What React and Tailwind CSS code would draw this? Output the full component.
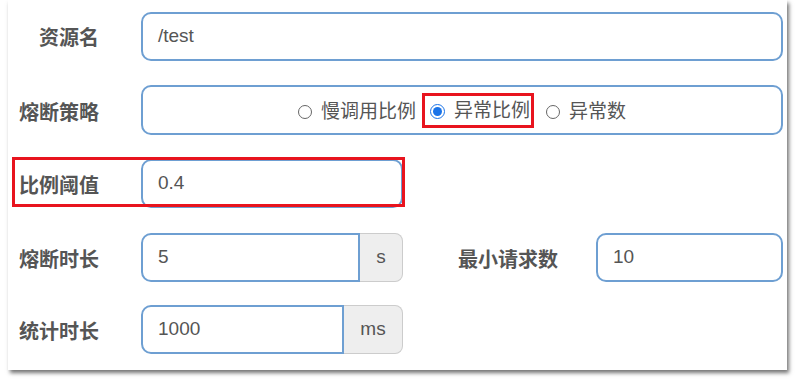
import React from "react";

const font = { fontFamily: '"Liberation Sans", "Noto Sans CJK SC", sans-serif' };

function Label({ children, className = "" }) {
  return (
    <div className={"text-right font-bold text-[20px] text-[#555] leading-none " + className}>
      {children}
    </div>
  );
}

function Radio({ checked }) {
  if (checked) {
    return (
      <span className="w-[15px] h-[15px] shrink-0 rounded-full border-[1.5px] border-[#1a73e8] bg-white flex items-center justify-center">
        <span className="w-[9px] h-[9px] rounded-full bg-[#1a73e8]" />
      </span>
    );
  }
  return <span className="w-[14px] h-[14px] shrink-0 rounded-full border-[1.5px] border-[#666] bg-white" />;
}

export default function App() {
  return (
    <div className="w-[797px] h-[385px] bg-white" style={font}>
      <div className="ml-[8px] w-[779px] h-[370px] bg-white shadow-[2px_3px_4px_rgba(0,0,0,0.55)] pt-[12px] flex flex-col">
        {/* Row 1 */}
        <div className="flex items-center h-[49px]">
          <Label className="w-[91px] mt-[2px]">资源名</Label>
          <div className="ml-[42px] w-[642px] h-full border-2 border-[#6e9fd2] rounded-[10px] flex items-center pl-[15px] text-[19px] text-[#555]">
            /test
          </div>
        </div>
        {/* Row 2 */}
        <div className="flex items-center h-[50px] mt-[24px]">
          <Label className="w-[91px] mt-[6px]">熔断策略</Label>
          <div className="ml-[42px] w-[642px] h-full border-2 border-[#6e9fd2] rounded-[10px] flex items-center justify-center text-[19px] text-[#555]">
            <div className="flex items-center mt-[4px]">
              <Radio />
              <span className="ml-[9px]">慢调用比例</span>
            </div>
            <div className="ml-[6px] h-[35px] border-[3px] border-[#e8141e] flex items-center pl-[5px] pr-[1px]">
              <div className="flex items-center mt-[2px]">
                <Radio checked />
                <span className="ml-[9px]">异常比例</span>
              </div>
            </div>
            <div className="flex items-center mt-[4px] ml-[12px]">
              <Radio />
              <span className="ml-[9px]">异常数</span>
            </div>
          </div>
        </div>
        {/* Row 3 */}
        <div className="relative flex items-center h-[49px] mt-[24px]">
          <Label className="w-[91px] mt-[4px]">比例阈值</Label>
          <div className="ml-[42px] w-[262px] h-full border-2 border-[#6e9fd2] rounded-[10px] flex items-center pl-[15px] text-[19px] text-[#555]">
            0.4
          </div>
          <div className="absolute left-[4px] top-[-2px] w-[393px] h-[50px] border-[3px] border-[#e8141e]" />
        </div>
        {/* Row 4 */}
        <div className="flex items-center h-[49px] mt-[25px]">
          <Label className="w-[91px] mt-[4px]">熔断时长</Label>
          <div className="ml-[42px] flex h-full">
            <div className="w-[219px] h-full border-2 border-[#6e9fd2] rounded-l-[10px] flex items-center pl-[15px] text-[19px] text-[#555]">
              5
            </div>
            <div className="w-[43px] h-full bg-[#eee] border border-l-0 border-[#ccc] rounded-r-[8px] flex items-center justify-center text-[19px] text-[#555]">
              s
            </div>
          </div>
          <Label className="w-[155px] mt-[4px]">最小请求数</Label>
          <div className="ml-[38px] w-[187px] h-full border-2 border-[#6e9fd2] rounded-[10px] flex items-center pl-[15px] text-[19px] text-[#555]">
            10
          </div>
        </div>
        {/* Row 5 */}
        <div className="flex items-center h-[49px] mt-[23px]">
          <Label className="w-[91px] mt-[4px]">统计时长</Label>
          <div className="ml-[42px] flex h-full">
            <div className="w-[203px] h-full border-2 border-[#6e9fd2] rounded-l-[10px] flex items-center pl-[15px] text-[19px] text-[#555]">
              1000
            </div>
            <div className="w-[59px] h-full bg-[#eee] border border-l-0 border-[#ccc] rounded-r-[8px] flex items-center justify-center text-[19px] text-[#555]">
              ms
            </div>
          </div>
        </div>
      </div>
    </div>
  );
}
